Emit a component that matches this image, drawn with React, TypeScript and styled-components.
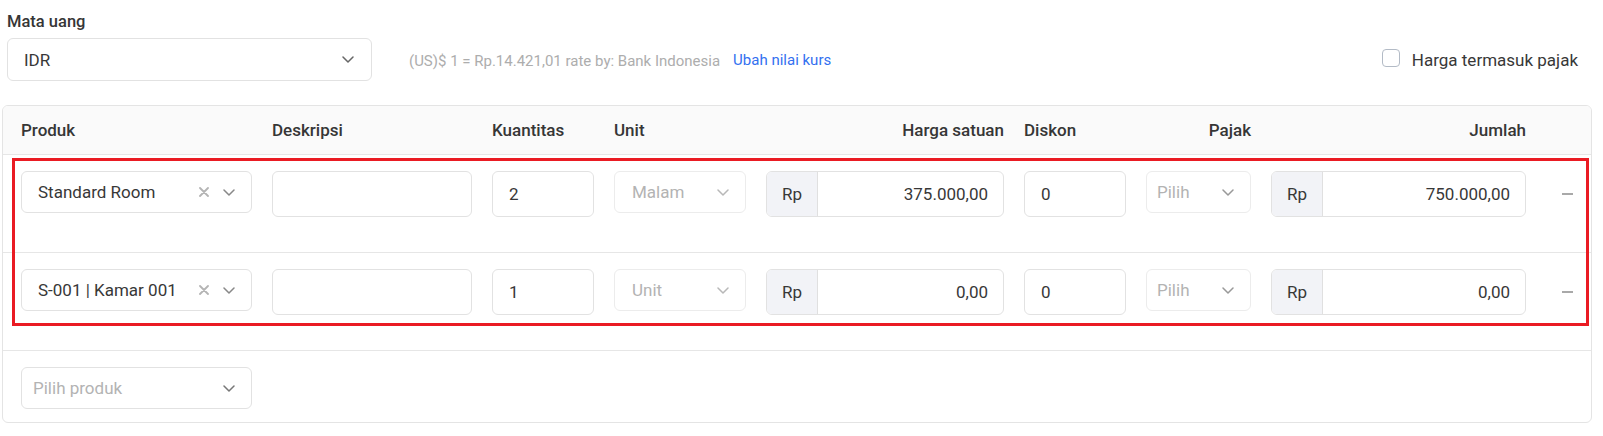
import React from "react";
import styled, { createGlobalStyle } from "styled-components";

const GlobalStyle = createGlobalStyle`
  html, body { margin: 0; padding: 0; background: #fff; }
  body {
    font-family: Roboto, "Noto Sans", "Liberation Sans", sans-serif;
    color: #383838;
  }
  * { box-sizing: border-box; }
`;

const Page = styled.div`
  width: 1603px;
  padding: 11px 11px 12px 2px;
`;

const TopBar = styled.div`
  display: flex;
  align-items: flex-end;
  padding: 0 14px 0 5px;
`;

const CurrencyField = styled.div`
  display: flex;
  flex-direction: column;
  gap: 5px;
`;

const FieldLabel = styled.label`
  font-size: 16.5px;
  font-weight: 500;
  line-height: 22px;
  color: #363636;
`;

const RateInfo = styled.div`
  display: flex;
  align-items: center;
  height: 43px;
  margin-left: 37px;
  gap: 13px;
`;

const RateText = styled.span`
  font-size: 15px;
  color: #adadad;
  margin-top: 3px;
`;

const RateLink = styled.a`
  font-size: 15px;
  color: #3370f0;
  text-decoration: none;
  cursor: pointer;
`;

const TaxToggle = styled.label`
  margin-left: auto;
  display: flex;
  align-items: center;
  gap: 12px;
  height: 43px;
  font-size: 17px;
  color: #383838;
  cursor: pointer;
`;

const CheckBox = styled.span`
  width: 18px;
  height: 18px;
  border: 1.5px solid #b3bbc6;
  border-radius: 4px;
  background: #fff;
  margin-top: -4px;
`;

const Table = styled.div`
  margin-top: 24px;
  border: 1px solid #e4e4e4;
  border-radius: 6px;
  overflow: hidden;
`;

const gridColumns = "231px 200px 102px 132px 238px 102px 105px 255px 1fr";

const HeaderRow = styled.div`
  display: grid;
  grid-template-columns: ${gridColumns};
  column-gap: 20px;
  align-items: center;
  height: 49px;
  padding: 0 3px 0 18px;
  background: #fafafa;
  border-bottom: 1px solid #e6e6e6;
`;

const HeadCell = styled.div<{ $align?: "left" | "right" }>`
  font-size: 17px;
  font-weight: 500;
  color: #363636;
  text-align: ${(p) => p.$align || "left"};
  white-space: nowrap;
`;

const HighlightGroup = styled.div`
  position: relative;
`;

const Highlight = styled.div`
  position: absolute;
  top: 3px;
  left: 9px;
  right: 2px;
  height: 168px;
  border: 3px solid #ea1b23;
  pointer-events: none;
`;

const Row = styled.div<{ $last?: boolean }>`
  display: grid;
  grid-template-columns: ${gridColumns};
  column-gap: 20px;
  align-items: start;
  padding: 16px 3px ${(p) => (p.$last ? "13px" : "35px")} 18px;
  border-bottom: ${(p) => (p.$last ? "none" : "1px solid #e6e6e6")};
`;

const SelectBox = styled.div<{ $pad?: number; $height?: number; $disabled?: boolean }>`
  display: flex;
  align-items: center;
  height: ${(p) => p.$height || 42}px;
  padding: 0 ${(p) => (p.$height ? 17 : 16)}px 0 ${(p) => p.$pad ?? 16}px;
  border: 1px solid ${(p) => (p.$disabled ? "#ececec" : "#e2e2e2")};
  border-radius: 6px;
  background: #fff;
`;

const SelectValue = styled.span<{ $muted?: boolean }>`
  flex: 1;
  font-size: 17px;
  color: ${(p) => (p.$muted ? "#b3b3b3" : "#383838")};
  white-space: nowrap;
  overflow: hidden;
`;

const Icons = styled.span`
  display: flex;
  align-items: center;
  gap: 14px;
`;

const TextInput = styled.div`
  display: flex;
  align-items: center;
  height: 46px;
  padding: 0 15px 0 16px;
  border: 1px solid #e2e2e2;
  border-radius: 6px;
  font-size: 17px;
  color: #383838;
  background: #fff;
`;

const MoneyInput = styled.div`
  display: flex;
  height: 46px;
  border: 1px solid #e2e2e2;
  border-radius: 6px;
  overflow: hidden;
  background: #fff;
`;

const Addon = styled.span`
  display: flex;
  align-items: center;
  width: 51px;
  padding-left: 15px;
  background: #f2f3f7;
  border-right: 1px solid #e0e0e0;
  font-size: 17px;
  color: #383838;
`;

const MoneyValue = styled.span`
  flex: 1;
  display: flex;
  align-items: center;
  justify-content: flex-end;
  padding-right: 15px;
  font-size: 17px;
  color: #383838;
`;

const ActionCell = styled.div`
  height: 46px;
  display: flex;
  align-items: center;
  justify-content: center;
`;

const Chevron = ({ color = "#777" }: { color?: string }) => (
  <svg width="12" height="7" viewBox="0 0 12 7" fill="none">
    <path d="M1 1l5 5 5-5" stroke={color} strokeWidth="1.5" strokeLinecap="round" strokeLinejoin="round" />
  </svg>
);

const ClearIcon = () => (
  <svg width="10" height="10" viewBox="0 0 10 10" fill="none">
    <path d="M1 1l8 8M9 1l-8 8" stroke="#b4b4b4" strokeWidth="1.8" strokeLinecap="round" />
  </svg>
);

const MinusIcon = () => (
  <svg width="11" height="2" viewBox="0 0 11 2" fill="none">
    <path d="M0 1h11" stroke="#8c8c8c" strokeWidth="1.4" />
  </svg>
);

type Line = {
  product: string;
  qty: string;
  unit: string;
  price: string;
  total: string;
};

const lines: Line[] = [
  { product: "Standard Room", qty: "2", unit: "Malam", price: "375.000,00", total: "750.000,00" },
  { product: "S-001 | Kamar 001", qty: "1", unit: "Unit", price: "0,00", total: "0,00" },
];

const ItemRow = ({ line }: { line: Line }) => (
  <Row>
    <SelectBox $pad={16}>
      <SelectValue>{line.product}</SelectValue>
      <Icons>
        <ClearIcon />
        <Chevron color="#888" />
      </Icons>
    </SelectBox>
    <TextInput />
    <TextInput>{line.qty}</TextInput>
    <SelectBox $pad={17} $disabled>
      <SelectValue $muted>{line.unit}</SelectValue>
      <Chevron color="#b8b8b8" />
    </SelectBox>
    <MoneyInput>
      <Addon>Rp</Addon>
      <MoneyValue>{line.price}</MoneyValue>
    </MoneyInput>
    <TextInput>0</TextInput>
    <SelectBox $pad={10} $disabled>
      <SelectValue $muted>Pilih</SelectValue>
      <Chevron color="#999" />
    </SelectBox>
    <MoneyInput>
      <Addon>Rp</Addon>
      <MoneyValue>{line.total}</MoneyValue>
    </MoneyInput>
    <ActionCell>
      <MinusIcon />
    </ActionCell>
  </Row>
);

export default function App() {
  return (
    <Page>
      <GlobalStyle />
      <TopBar>
        <CurrencyField>
          <FieldLabel>Mata uang</FieldLabel>
          <SelectBox style={{ width: 365 }} $height={43}>
            <SelectValue>IDR</SelectValue>
            <Chevron color="#666" />
          </SelectBox>
        </CurrencyField>
        <RateInfo>
          <RateText>(US)$ 1 = Rp.14.421,01 rate by: Bank Indonesia</RateText>
          <RateLink>Ubah nilai kurs</RateLink>
        </RateInfo>
        <TaxToggle>
          <CheckBox />
          Harga termasuk pajak
        </TaxToggle>
      </TopBar>

      <Table>
        <HeaderRow>
          <HeadCell>Produk</HeadCell>
          <HeadCell>Deskripsi</HeadCell>
          <HeadCell>Kuantitas</HeadCell>
          <HeadCell>Unit</HeadCell>
          <HeadCell $align="right">Harga satuan</HeadCell>
          <HeadCell>Diskon</HeadCell>
          <HeadCell $align="right">Pajak</HeadCell>
          <HeadCell $align="right">Jumlah</HeadCell>
          <HeadCell />
        </HeaderRow>
        <HighlightGroup>
          {lines.map((l) => (
            <ItemRow key={l.product} line={l} />
          ))}
          <Highlight />
        </HighlightGroup>
        <Row $last>
          <SelectBox $pad={11}>
            <SelectValue $muted>Pilih produk</SelectValue>
            <Chevron color="#777" />
          </SelectBox>
        </Row>
      </Table>
    </Page>
  );
}
